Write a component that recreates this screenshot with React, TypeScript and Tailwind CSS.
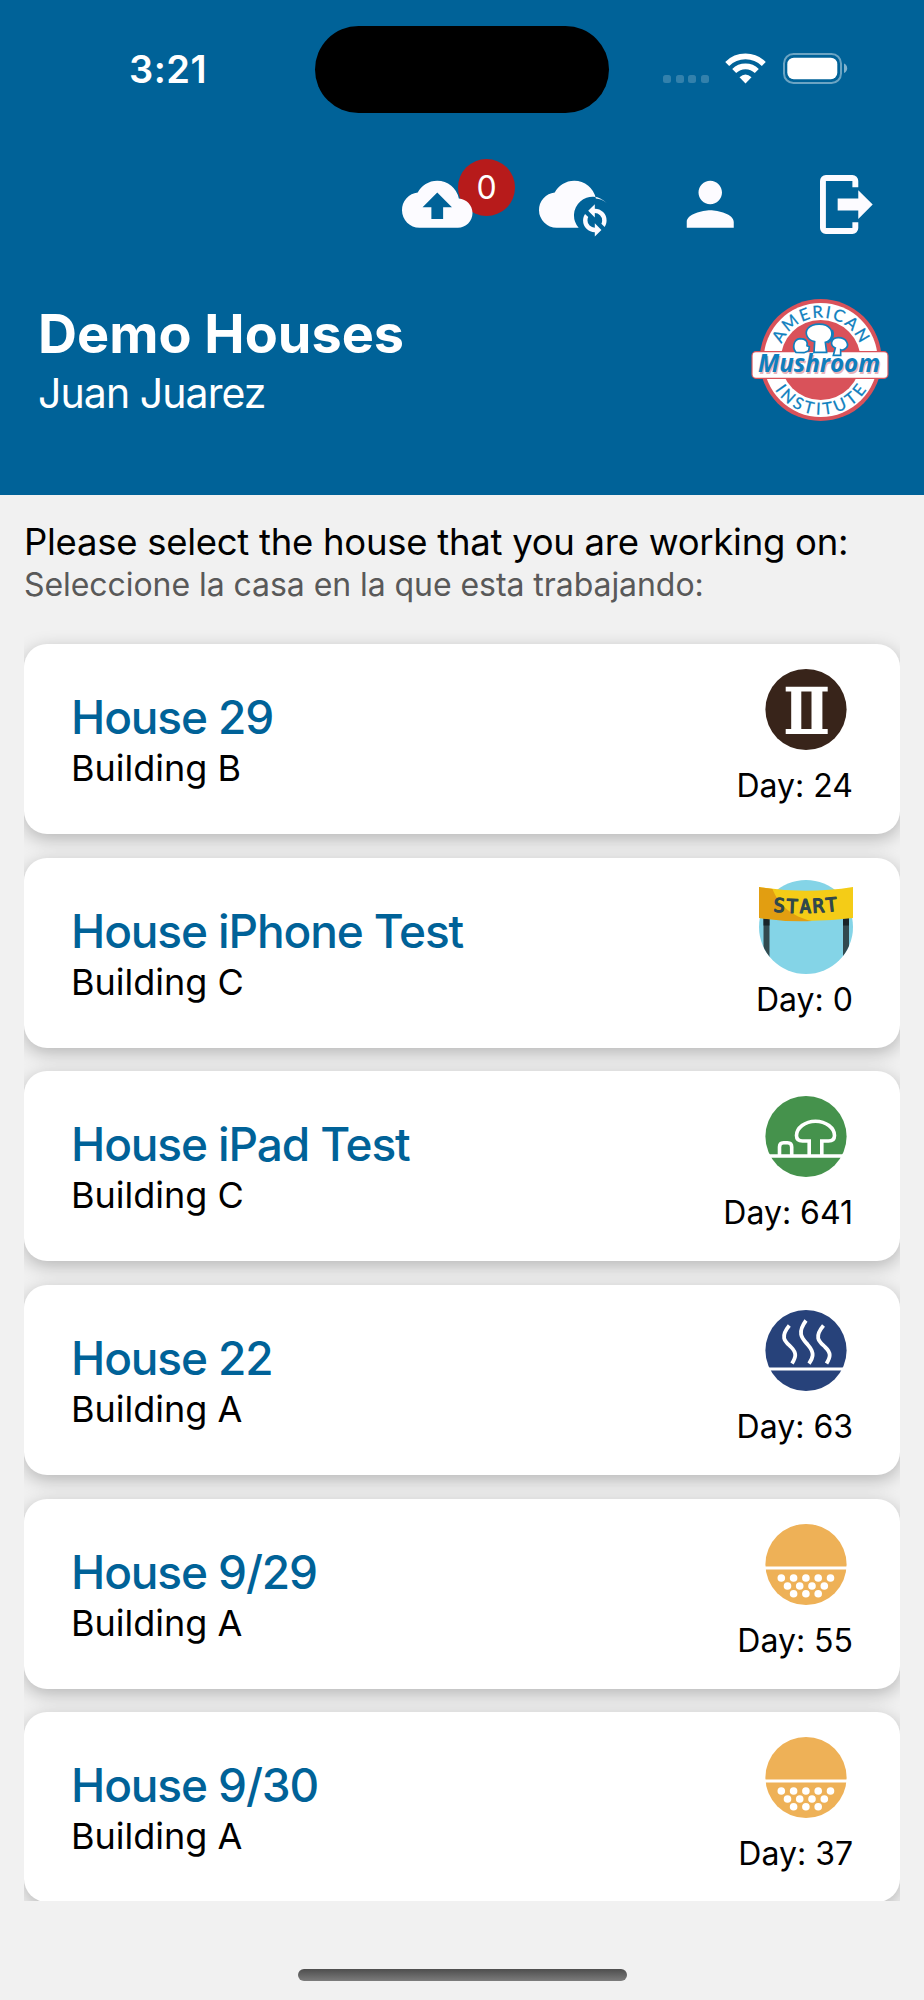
import type { ReactNode } from "react"
import { MdCloudUpload, MdPerson } from "react-icons/md"

type Stage = "phaseTwo" | "start" | "harvest" | "steam" | "casing"

const houses: { name: string; building: string; day: number; stage: Stage }[] = [
    { name: "House 29", building: "Building B", day: 24, stage: "phaseTwo" },
    { name: "House iPhone Test", building: "Building C", day: 0, stage: "start" },
    { name: "House iPad Test", building: "Building C", day: 641, stage: "harvest" },
    { name: "House 22", building: "Building A", day: 63, stage: "steam" },
    { name: "House 9/29", building: "Building A", day: 55, stage: "casing" },
    { name: "House 9/30", building: "Building A", day: 37, stage: "casing" },
]

/* Stage icons, all on a 94 x 94 grid */
const stageIcons: Record<Stage, ReactNode> = {
    phaseTwo: (
        <>
            <circle cx="47" cy="43.5" r="40.6" fill="#38241a" />
            <path
                fill="#fff"
                d="M26.7 20.700h42v4.900h-5.300v37.500h5.300v4.900h-42v-4.900h5.500V25.600h-5.500zM42.300 25.600v37.500h10.200V25.600z"
                fillRule="evenodd"
            />
        </>
    ),
    start: (
        <>
            <clipPath id="start-disc">
                <circle cx="47" cy="47" r="47" />
            </clipPath>
            <g clipPath="url(#start-disc)">
                <path fill="#84d4e7" d="M0 0h94v94H0z" />
                <path fill="#324a4f" d="M4.5 36h6v45h-6zM84 36h6v45h-6z" />
                <path fill="#192529" d="M4.5 36h6v9.5h-6zM84 36h6v9.5h-6z" />
            </g>
            <path fill="#f4cc17" d="M0 7Q47 14.500 94 7V38Q47 44 0 38Z" />
            <path fill="#e29e11" d="M0 7Q7 8.300 13.500 9C19 24 33 37 53 41Q26 42 0 38Z" />
            <path id="start-line" d="M14 31.500Q47 35 80 30.500" fill="none" />
            <text
                fill="#2f474c"
                stroke="#2f474c"
                strokeWidth="1.2"
                strokeLinejoin="round"
                fontSize="19"
                className="font-['DejaVu_Sans_Mono',monospace]"
            >
                <textPath href="#start-line" textLength="65">START</textPath>
            </text>
        </>
    ),
    harvest: (
        <>
            <circle cx="47" cy="43.5" r="40.6" fill="#45924c" />
            <g stroke="#fff" strokeWidth="3.6" fill="none">
                <path d="M6 63h82" />
                <path d="M20.500 62V54Q20.500 49.800 24.500 49.800H28.500Q32.700 49.800 32.700 54V62" />
                <path d="M50.200 62V48H43.500Q37.500 48 37.500 42.500C37.500 35 46 28.200 56.500 28.200S75.500 35 75.500 42.500Q75.500 48 69.500 48H62.800V62" />
            </g>
        </>
    ),
    steam: (
        <>
            <circle cx="47" cy="43.5" r="40.6" fill="#27427a" />
            <path stroke="#fff" strokeWidth="3.2" d="M5 62h84" />
            <g stroke="#fff" strokeWidth="3.8" fill="none">
                <path d="M30.300 18.500C20 31 27 35 32 40C38 46 37 50 33 56.600" />
                <path d="M47 13.500C37 27 44 32 49 38C56 46 54 51 50 56.600" />
                <path d="M64.500 18.500C54 31 61 35 66 40C72.500 46 71.500 50 67.500 56.600" />
            </g>
        </>
    ),
    casing: (
        <>
            <circle cx="47" cy="43.5" r="40.6" fill="#eeb157" />
            <path stroke="#fff" strokeWidth="3.2" d="M5 47h84" />
            <g fill="#fff">
                {[22.3, 34.6, 46.9, 59.2, 71.5].map((x) => <circle key={x} cx={x} cy="57" r="3.8" />)}
                {[28.5, 40.7, 53, 65.3].map((x) => <circle key={x} cx={x} cy="65" r="3.8" />)}
                {[34.6, 46.9, 59.2].map((x) => <circle key={x} cx={x} cy="72.700" r="3.8" />)}
            </g>
        </>
    ),
}

function StatusBar() {
    return (
        <div className="flex h-[139px] items-start text-white">
            <div className="w-[315px] pt-[45px] pl-[129px] text-[38px] leading-[48px] font-semibold tracking-[0.5px]">3:21</div>
            <div className="mt-[26px] h-[87px] w-[294px] rounded-full bg-black" />
            <div className="ml-[54px] flex pt-[53px]">
                <div className="flex gap-[4.6px] pt-[22px]">
                    {[0, 1, 2, 3].map((i) => (
                        <span key={i} className="h-2 w-2 rounded-[2.5px] bg-white/20" />
                    ))}
                </div>
                <svg className="ml-[16px] h-[31px] w-[41px]" viewBox="0 0 41 31">
                    <g fill="none" stroke="#fff" strokeWidth="5.6">
                        <path d="M2.200 10.900A26 26 0 0 1 38.800 10.900" />
                        <path d="M9.200 18A16 16 0 0 1 31.800 18" />
                    </g>
                    <path fill="#fff" d="M20.500 30.500L14.500 24.200Q20.500 19 26.500 24.200Z" />
                </svg>
                <svg className="ml-[17px] h-[31px] w-[65px]" viewBox="0 0 65 31">
                    <rect x="1" y="1" width="57" height="29" rx="9.500" fill="none" stroke="#fff" strokeOpacity="0.42" strokeWidth="2" />
                    <rect x="4.300" y="4.700" width="50" height="21.500" rx="6.500" fill="#fff" />
                    <path fill="#fff" fillOpacity="0.5" d="M61 10.500Q64.200 12 64.200 15.200T61 20Z" />
                </svg>
            </div>
        </div>
    )
}

function Toolbar() {
    return (
        <div className="flex h-[131px] items-start pt-[30px] pl-[402px] text-[#fcfbff]">
            <div className="relative mr-[66px]">
                <span className="absolute -top-[10px] left-[56px] flex h-[57px] w-[57px] items-center justify-center rounded-full bg-[#b71b1b] pt-px text-[32px] text-white">
                    0
                </span>
                <MdCloudUpload className="relative h-[70.5px] w-[70.5px]" />
            </div>
            <svg className="mr-[66px] h-[70.5px] w-[70.5px]" viewBox="0 0 24 24" fill="currentColor">
                <path d="M12 4C9.110 4 6.600 5.640 5.350 8.040A5.994 5.994 0 0 0 0 14a6 6 0 0 0 6 6h7.500A6.300 6.300 0 0 1 23 11.600C22 10.700 20.700 10.100 19.350 10.040A7.490 7.490 0 0 0 12 4Z" />
                <path d="M19 12v1.500a4 4 0 0 1 4 4c0 .82-.25 1.580-.67 2.210l-1.090-1.090c.17-.34.26-.72.26-1.120a2.500 2.500 0 0 0-2.500-2.500v1.500l-2.250-2.250zM19 23v-1.500a4 4 0 0 1-4-4c0-.82.25-1.580.67-2.210l1.090 1.090c-.17.34-.26.72-.26 1.120a2.500 2.500 0 0 0 2.500 2.500v-1.500l2.250 2.250z" />
            </svg>
            <MdPerson className="mr-[74px] h-[70.5px] w-[70.5px]" />
            <svg className="mt-[6px] h-[59px] w-[53px]" viewBox="0 0 18 20" fill="currentColor">
                <path d="M2 0h9a2 2 0 0 1 2 2v2.100h-2V2H2v16h9v-2h2v2a2 2 0 0 1-2 2H2a2 2 0 0 1-2-2V2a2 2 0 0 1 2-2z" />
                <path d="M6 8h7V5.200L17.900 10L13 14.900V12H6z" />
            </svg>
        </div>
    )
}

function InstituteLogo() {
    return (
        <svg className="h-[124px] w-[140px] overflow-visible" viewBox="62 54 420 372">
            <circle cx="274" cy="240" r="183" fill="#d9525a" />
            <circle cx="274" cy="240" r="171" fill="#fff" />
            <circle cx="274" cy="240" r="120" fill="#d9525a" />
            <path id="arc-top" d="M147 240A127 127 0 0 1 401 240" fill="none" />
            <path id="arc-bottom" d="M110 240A164 164 0 0 0 438 240" fill="none" />
            <g fill="#0f7fbe" stroke="#0f7fbe" strokeWidth="0.8" fontSize="50" className="font-[Lato,sans-serif]">
                <text textAnchor="middle">
                    <textPath href="#arc-top" startOffset="50%" textLength="300">AMERICAN</textPath>
                </text>
                <text textAnchor="middle">
                    <textPath href="#arc-bottom" startOffset="50%" textLength="326">INSTITUTE</textPath>
                </text>
            </g>
            <rect x="68" y="215" width="408" height="80" rx="12" fill="#fff" stroke="#d9525a" strokeWidth="3.500" />
            <g fill="#fff" stroke="#0f7fbe" strokeWidth="5">
                <path d="M200 217C188 204 192 178 212 176C230 176 236 186 233 197L240 200L238 212L224 218Z" />
                <path d="M256 185C234 180 224 160 236 145C250 128 290 128 303 146C314 164 304 184 288 187L292 217H254Z" />
                <path d="M318 204C300 196 304 174 326 173C352 172 362 196 348 206Q342 212 334 209L334 226H312Z" />
            </g>
            <path d="M308 150Q318 172 294 188" fill="none" stroke="#0f7fbe" strokeWidth="7" />
            <g fontSize="77" className="font-['Open_Sans',sans-serif] font-bold italic">
                <text x="90" y="281" textLength="366" lengthAdjust="spacingAndGlyphs" fill="#e9b3bb">Mushroom</text>
                <text x="86" y="277" textLength="366" lengthAdjust="spacingAndGlyphs" fill="#0f7fbe">Mushroom</text>
            </g>
        </svg>
    )
}

function HouseCard({ name, building, day, stage }: (typeof houses)[number]) {
    return (
        <article className="flex h-[190px] shrink-0 justify-between rounded-[23px] bg-white pr-[47px] pl-[47px] shadow-[0_5px_18px_rgba(0,0,0,0.25)]">
            <div className="pt-[46px]">
                <h2 className="text-[46px] leading-[54px] font-medium tracking-[-1.12px] text-[#006298]">{name}</h2>
                <p className="pt-px text-[36px] leading-[46px]">{building}</p>
            </div>
            <div className="flex flex-col items-end gap-[6px] pt-[22px]">
                <svg className="h-[94px] w-[94px]" viewBox="0 0 94 94">
                    {stageIcons[stage]}
                </svg>
                <p className="text-[32px] leading-[40px]">Day: {day}</p>
            </div>
        </article>
    )
}

export default function App() {
    return (
        <div className="flex h-[2000px] w-[924px] flex-col overflow-hidden bg-[#f1f1f1] font-[Inter,sans-serif] text-black">
            <header className="h-[495px] shrink-0 bg-[#006298]">
                <StatusBar />
                <Toolbar />
                <div className="flex items-start justify-between pt-[28px] pr-[34px] pl-[38px] text-white">
                    <div className="pt-[4px]">
                        <h1 className="text-[54px] leading-[64px] font-bold">Demo Houses</h1>
                        <p className="pt-[2px] text-[41px] leading-[50px] tracking-[-0.93px]">Juan Juarez</p>
                    </div>
                    <InstituteLogo />
                </div>
            </header>

            <div className="px-6 pt-[24px]">
                <p className="text-[36.5px] leading-[46px] tracking-[-0.27px] whitespace-nowrap">
                    Please select the house that you are working on:
                </p>
                <p className="text-[32px] leading-[40px] tracking-[-0.06px] text-[#595959]">
                    Seleccione la casa en la que esta trabajando:
                </p>
            </div>

            {/* The list clips the card shadows on both sides */}
            <main className="mx-6 mt-[15px] flex h-[1281px] shrink-0 flex-col gap-[23.7px] overflow-hidden pt-[24px]">
                {houses.map((house) => (
                    <HouseCard key={house.name} {...house} />
                ))}
            </main>

            <div className="mt-[68px] h-[12px] w-[329px] shrink-0 self-center rounded-full bg-linear-to-b from-[#4e4e4e] to-[#7c7c7c]" />
        </div>
    )
}
